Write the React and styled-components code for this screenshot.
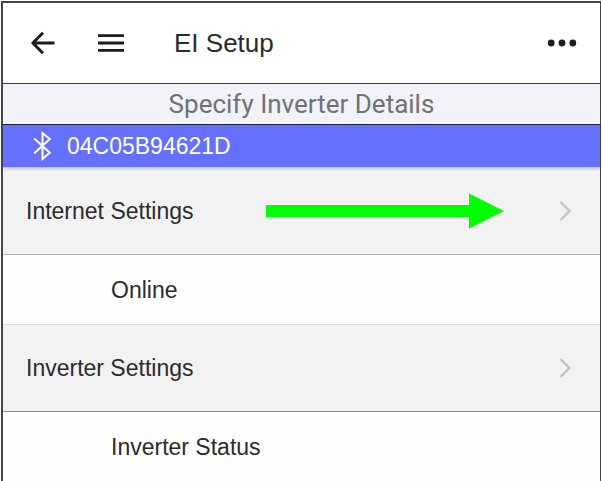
import styled, { createGlobalStyle } from "styled-components";


const EstilosGlobais = createGlobalStyle`
    * {
        box-sizing: border-box;
    }
    body {
        margin: 0;
        background-color: #ffffff;
        font-family: "Liberation Sans", Arial, sans-serif;
        color: #2b2b2d;
    }
`

const Screen = styled.div`
    margin: 1px 1px 0;
    border: solid #45474b;
    border-width: 2px 1px 0 2px;
`

const Header = styled.header`
    display: flex;
    align-items: center;
    height: 81px;
    padding: 0 22px 0 24px;
    border-bottom: 1px solid #3c3d40;
`

const IconButton = styled.button`
    display: flex;
    align-items: center;
    justify-content: center;
    width: 32px;
    height: 32px;
    padding: 0;
    margin-right: ${props => props.$gap || "0"};
    border: none;
    background: none;
    color: #1c1c1e;
    cursor: pointer;
`

const Title = styled.h1`
    flex: 1;
    margin: 0;
    font-size: 26px;
    line-height: 32px;
    font-weight: 400;
`

const Subtitle = styled.h2`
    margin: 0;
    padding: 4px 0;
    border-bottom: 1px solid #23263f;
    background-color: #f1f3f9;
    color: #6e7276;
    font-family: Roboto, sans-serif;
    font-size: 26px;
    line-height: 32px;
    font-weight: 400;
    text-align: center;
`

const DeviceBar = styled.div`
    position: relative;
    display: flex;
    align-items: center;
    gap: 12px;
    height: 43px;
    padding-left: 28px;
    border-bottom: 1px solid #c3c5dc;
    background-color: #6670ff;
    box-shadow: 0 1px 3px rgba(0, 0, 0, 0.2);
    color: #ffffff;
    font-size: 23px;
    line-height: 32px;
`

const SectionLink = styled.a`
    display: flex;
    align-items: center;
    height: 87px;
    padding: 0 27px 0 23px;
    border-bottom: 1px solid ${props => props.$line};
    background-color: #f2f2f3;
    color: inherit;
    font-size: 23px;
    line-height: 32px;
    text-decoration: none;
`

const SectionName = styled.span`
    flex: 1;
`

const Pointer = styled.svg`
    margin-right: 53px;
`

const StatusRow = styled.div`
    display: flex;
    align-items: center;
    height: 70px;
    padding-left: 108px;
    border-bottom: 1px solid #dddde0;
    background-color: #fefefd;
    font-size: 23px;
    line-height: 32px;

    &:last-child {
        border-bottom: none;
    }
`

const BackIcon = () => (
    <svg width="28" height="26" viewBox="0 0 28 26" fill="none" stroke="currentColor" strokeWidth="3" strokeLinejoin="round">
        <path d="M25.5 13H4M14 2.8L3.8 13L14 23.2" />
    </svg>
)

const MenuIcon = () => (
    <svg width="28" height="20" viewBox="0 0 28 20" fill="none" stroke="currentColor" strokeWidth="2.8">
        <path d="M1 2.7H27M1 10H27M1 17.3H27" />
    </svg>
)

const MoreIcon = () => (
    <svg width="30" height="8" viewBox="0 0 30 8" fill="currentColor">
        <circle cx="4.2" cy="4" r="3.4" />
        <circle cx="15" cy="4" r="3.4" />
        <circle cx="25.8" cy="4" r="3.4" />
    </svg>
)

const BluetoothIcon = () => (
    <svg width="24" height="32" viewBox="0 0 24 32" fill="none" stroke="currentColor" strokeWidth="2" aria-hidden="true">
        <path d="M3.2 8.5L18.8 22.8L11.5 28.8V3L18.8 9L3.2 23.3" />
    </svg>
)

const Chevron = () => (
    <svg width="16" height="22" viewBox="0 0 16 22" fill="none" stroke="#c2c2c5" strokeWidth="2.4" aria-hidden="true">
        <path d="M3.5 2L12.5 11L3.5 20" />
    </svg>
)

const GreenArrow = () => (
    <Pointer width="238" height="36" viewBox="0 0 238 36" fill="#00ff00" aria-hidden="true">
        <path d="M0 12H203V0.5L238 18L203 35.5V24H0Z" />
    </Pointer>
)


const App = () => {
    return (
        <>
            <EstilosGlobais />
            <Screen>
                <Header>
                    <IconButton $gap="36px" aria-label="Back"><BackIcon /></IconButton>
                    <IconButton $gap="47px" aria-label="Menu"><MenuIcon /></IconButton>
                    <Title>EI Setup</Title>
                    <IconButton aria-label="More options"><MoreIcon /></IconButton>
                </Header>
                <Subtitle>Specify Inverter Details</Subtitle>
                <DeviceBar>
                    <BluetoothIcon />
                    <span>04C05B94621D</span>
                </DeviceBar>
                <SectionLink href="#internet" $line="#b4b4b6">
                    <SectionName>Internet Settings</SectionName>
                    <GreenArrow />
                    <Chevron />
                </SectionLink>
                <StatusRow>Online</StatusRow>
                <SectionLink href="#inverter" $line="#8f8f92">
                    <SectionName>Inverter Settings</SectionName>
                    <Chevron />
                </SectionLink>
                <StatusRow>Inverter Status</StatusRow>
            </Screen>
        </>
    )
}

export default App;
